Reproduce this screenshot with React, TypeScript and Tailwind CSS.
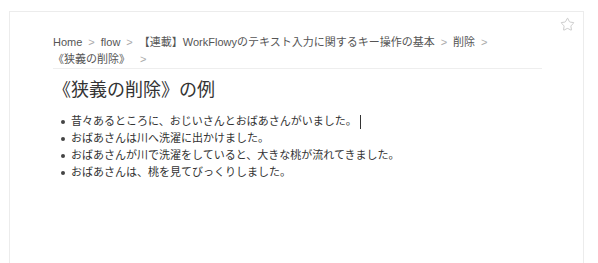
import { Star } from 'lucide-react'

const CRUMBS = ['Home', 'flow', '【連載】WorkFlowyのテキスト入力に関するキー操作の基本', '削除', '《狭義の削除》']

const ITEMS = [
  '昔々あるところに、おじいさんとおばあさんがいました。',
  'おばあさんは川へ洗濯に出かけました。',
  'おばあさんが川で洗濯をしていると、大きな桃が流れてきました。',
  'おばあさんは、桃を見てびっくりしました。',
]

export default function App() {
  return (
    <div className="h-[263px] overflow-hidden bg-white pl-[9px] pt-[11px] font-['Liberation_Sans','Noto_Sans_CJK_JP',sans-serif]">
      <div className="relative h-[300px] w-[575px] border border-[#ececec] bg-white pl-[43px] pt-[22px]">
        {/* Star toggle */}
        <button className="absolute right-[8px] top-[5px] text-[#bbb]">
          <Star size={15} strokeWidth={1.2} />
        </button>

        {/* Breadcrumb */}
        <nav className="w-[489px] border-b border-[#eee] text-[11px] leading-[17px] text-[#555]">
          {CRUMBS.map((c, i) => (
            <span key={i} className="inline-block whitespace-nowrap">
              {c}
              <span className={`${i === 4 ? 'ml-[10px]' : 'ml-[6px]'} mr-[6px] text-[#aaa]`}>&gt;</span>
            </span>
          ))}
        </nav>

        {/* Title */}
        <h1 className="mt-[9px] text-[18px] leading-[24px] text-[#333]">《狭義の削除》の例</h1>

        {/* Items */}
        <ul className="mt-[11px] text-[11px] leading-[17px] text-[#333]">
          {ITEMS.map((t, i) => (
            <li key={i} className="flex items-center">
              <span className="ml-[8px] mr-[6px] h-[4px] w-[4px] rounded-full bg-[#444]" />
              <span>{t}</span>
              {i === 0 && <span className="ml-[3px] h-[14px] w-px bg-[#333]" />}
            </li>
          ))}
        </ul>
      </div>
    </div>
  )
}
